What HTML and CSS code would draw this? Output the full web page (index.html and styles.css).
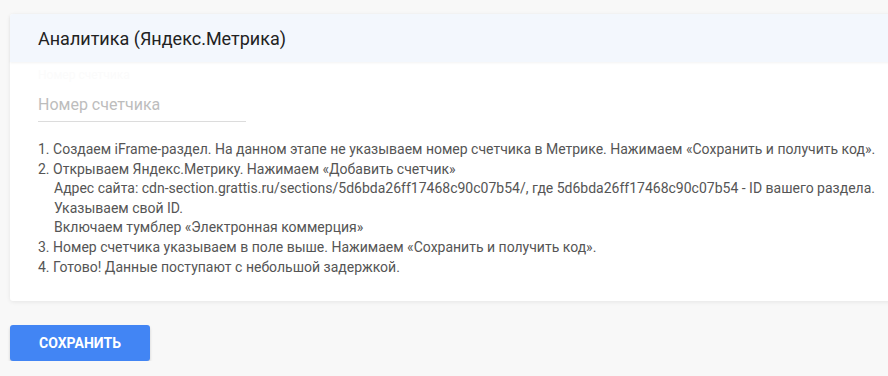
FILE: index.html
```html
<!DOCTYPE html>
<html lang="ru">
<head>
<meta charset="utf-8">
<title>Аналитика</title>
<link rel="stylesheet" href="styles.css">
</head>
<body>
<div class="page">
  <section class="card">
    <header class="card-head">
      <h2 class="card-title">Аналитика (Яндекс.Метрика)</h2>
    </header>
    <div class="card-body">
      <div class="field">
        <span class="field-label">Номер счетчика</span>
        <div class="field-input">Номер счетчика</div>
      </div>
      <div class="steps">
        <div class="step">1. Создаем iFrame-раздел. На данном этапе не указываем номер счетчика в Метрике. Нажимаем «Сохранить и получить код».</div>
        <div class="step">2. Открываем Яндекс.Метрику. Нажимаем «Добавить счетчик»</div>
        <div class="step indent">Адрес сайта: cdn-section.grattis.ru/sections/5d6bda26ff17468c90c07b54/, где 5d6bda26ff17468c90c07b54 - ID вашего раздела.</div>
        <div class="step indent">Указываем свой ID.</div>
        <div class="step indent">Включаем тумблер «Электронная коммерция»</div>
        <div class="step">3. Номер счетчика указываем в поле выше. Нажимаем «Сохранить и получить код».</div>
        <div class="step">4. Готово! Данные поступают с небольшой задержкой.</div>
      </div>
    </div>
  </section>
  <button class="btn-save" type="button">СОХРАНИТЬ</button>
</div>
</body>
</html>
```
FILE: styles.css
```css
html, body {
  margin: 0;
  padding: 0;
  background: #f8f8f8;
  overflow: hidden;
  font-family: Roboto, "Noto Sans", Arial, sans-serif;
}
.page {
  padding: 14px 0 0 10px;
}
.card {
  width: 900px;
  background: #fff;
  border-radius: 3px;
  box-shadow: 0 1px 4px rgba(0,0,0,0.08);
}
.card-head {
  height: 48px;
  padding: 0 28px;
  display: flex;
  align-items: center;
  background: #f3f7fd;
  box-shadow: 0 1px 3px rgba(0,0,0,0.05);
  border-radius: 3px 3px 0 0;
}
.card-title {
  margin: 0;
  font-size: 18px;
  font-weight: 400;
  color: #222;
}
.card-body {
  padding: 5px 28px 24px;
}
.field {
  width: 208px;
  display: flex;
  flex-direction: column;
}
.field-label {
  font-size: 12px;
  line-height: 16px;
  color: #fbfbfb;
}
.field-input {
  height: 32px;
  padding-top: 6px;
  line-height: 32px;
  font-size: 16px;
  color: #bdbdbd;
  border-bottom: 1px solid #dcdcdc;
}
.steps {
  margin-top: 18px;
  font-size: 14px;
  line-height: 19.6px;
  color: #555;
}
.indent {
  padding-left: 16px;
}
.btn-save {
  margin-top: 24px;
  width: 140px;
  height: 36px;
  border: 0;
  border-radius: 3px;
  background: #4285f4;
  color: #fff;
  font-family: Roboto, Arial, sans-serif;
  font-size: 14px;
  font-weight: 700;
  box-shadow: 0 2px 3px rgba(0,0,0,0.18);
  display: block;
}
```
